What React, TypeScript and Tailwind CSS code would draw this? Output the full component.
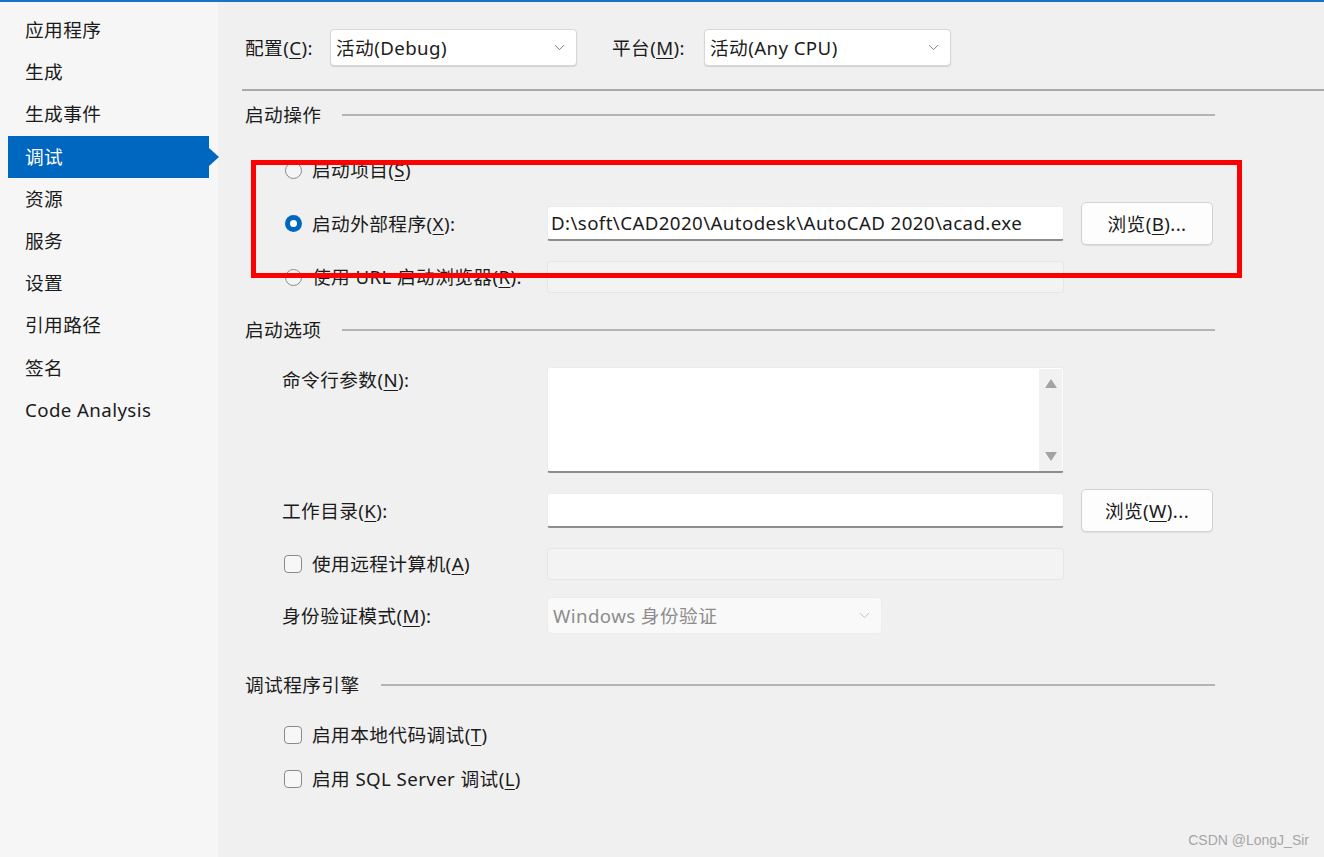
import React from "react";
import { ChevronDown } from "lucide-react";

function U({ children }: { children: React.ReactNode }) {
  return <span className="underline decoration-1 underline-offset-[3px]">{children}</span>;
}

function Radio({ checked }: { checked?: boolean }) {
  return checked ? (
    <span className="flex h-[17px] w-[17px] items-center justify-center rounded-full bg-[#0067c0]">
      <span className="h-[7px] w-[7px] rounded-full bg-white" />
    </span>
  ) : (
    <span className="h-[17px] w-[17px] rounded-full border-[1.5px] border-[#8a8a8a] bg-[#f5f5f5]" />
  );
}

function Check() {
  return <span className="h-[18px] w-[18px] rounded-[4px] border-[1.5px] border-[#8a8a8a] bg-[#f7f7f7]" />;
}

function Dropdown({ text, width, disabled }: { text: string; width: string; disabled?: boolean }) {
  return (
    <div
      className={
        "flex h-[37px] items-center justify-between rounded-[4px] border pl-[5px] pr-[8px] " +
        width +
        (disabled
          ? " border-[#ececec] bg-[#f9f9f9] text-[#8c8c8c]"
          : " border-[#d6d6d6] bg-white shadow-[0_1px_1px_rgba(0,0,0,0.12)]")
      }
    >
      <span>{text}</span>
      <ChevronDown size={17} strokeWidth={1.2} className={disabled ? "text-[#b5b5b5]" : "text-[#6a6a6a]"} />
    </div>
  );
}

function Field({ value, h = "h-[35px]" }: { value?: string; h?: string }) {
  return (
    <div
      className={
        "flex w-[517px] items-center rounded-[3px] border border-[#ececec] border-b-2 border-b-[#8d8d8d] bg-white pl-[3px] " + h
      }
    >
      {value}
    </div>
  );
}

function DisabledField({ h }: { h: string }) {
  return <div className={"w-[517px] rounded-[3px] border border-[#e6e6e6] bg-[#f3f3f3] " + h} />;
}

function Btn({ children }: { children: React.ReactNode }) {
  return (
    <div className="ml-[17px] flex h-[43px] w-[132px] items-center justify-center rounded-[5px] border border-[#d2d2d2] bg-[#fdfdfd] shadow-[0_1px_1px_rgba(0,0,0,0.08)]">
      {children}
    </div>
  );
}

function Heading({ children, mt }: { children: React.ReactNode; mt: string }) {
  return (
    <div className={"flex h-[24px] items-center " + mt}>
      <span className="pl-[3px]">{children}</span>
      <div className="ml-[21px] h-[2px] flex-1 bg-[#b4b4b4]" />
    </div>
  );
}

const items = ["应用程序", "生成", "生成事件", "调试", "资源", "服务", "设置", "引用路径", "签名", "Code Analysis"];

export default function App() {
  return (
    <div className="relative flex h-[857px] w-[1324px] overflow-hidden bg-[#f0f0f0] font-['Noto_Sans','Noto_Sans_CJK_SC',sans-serif] text-[18.7px] leading-[24px] tracking-[0.4px] text-[#1b1b1b]">
      <div className="absolute left-0 right-0 top-0 h-[2px] bg-[#1a73c8]" />
      {/* Sidebar */}
      <div className="w-[218px] shrink-0 bg-[#f6f6f6] pl-[8px] pt-[9px]">
        {items.map((it) =>
          it === "调试" ? (
            <div key={it} className="relative flex h-[42.2px] w-[201px] items-center bg-[#0067c0] pl-[17px] text-white">
              {it}
              <span className="absolute left-[201px] top-[12px] h-0 w-0 border-y-[9px] border-l-[10px] border-y-transparent border-l-[#0067c0]" />
            </div>
          ) : (
            <div key={it} className="flex h-[42.2px] w-[201px] items-center pl-[17px]">
              {it}
            </div>
          )
        )}
      </div>

      {/* Main */}
      <div className="relative flex-1">
        <div className="pl-[24px]">
          <div className="mt-[29px] flex h-[37px] items-center">
            <span className="w-[88px] pl-[3px]">
              配置(<U>C</U>):
            </span>
            <Dropdown text="活动(Debug)" width="w-[247px]" />
            <span className="ml-[35px] w-[92px]">
              平台(<U>M</U>):
            </span>
            <Dropdown text="活动(Any CPU)" width="w-[247px]" />
          </div>
        </div>
        <div className="ml-[24px] mt-[23px] h-[2px] bg-[#a9a9a9]" />

        <div className="pl-[24px] pr-[109px]">
          <Heading mt="mt-[12px]">启动操作</Heading>

          <div className="pl-[40px]">
            <div className="mt-[28px] flex h-[30px] items-center pl-[3px]">
              <Radio />
              <span className="ml-[10px]">
                启动项目(<U>S</U>)
              </span>
            </div>
            <div className="mt-[17px] flex h-[43px] items-center">
              <div className="flex w-[265px] items-center pl-[3px]">
                <Radio checked />
                <span className="ml-[10px]">
                  启动外部程序(<U>X</U>):
                </span>
              </div>
              <Field value="D:\soft\CAD2020\Autodesk\AutoCAD 2020\acad.exe" />
              <Btn>
                浏览(<U>B</U>)...
              </Btn>
            </div>
            <div className="mt-[16px] flex h-[32px] items-center">
              <div className="flex w-[265px] items-center pl-[3px]">
                <Radio />
                <span className="ml-[10px] whitespace-nowrap">
                  使用 URL 启动浏览器(<U>R</U>):
                </span>
              </div>
              <DisabledField h="h-[32px]" />
            </div>
          </div>

          <Heading mt="mt-[25px]">启动选项</Heading>

          <div className="pl-[40px]">
            <div className="mt-[25px] flex">
              <div className="w-[265px] pt-[1px]">
                命令行参数(<U>N</U>):
              </div>
              <div className="flex h-[106px] w-[517px] justify-end rounded-[3px] border border-[#ececec] border-b-2 border-b-[#8d8d8d] bg-white">
                <div className="mr-[1px] mt-[1px] flex w-[23px] flex-col items-center justify-between bg-[#f1f1f1] py-[10px]">
                  <span className="h-0 w-0 border-x-[6px] border-b-[9px] border-x-transparent border-b-[#a3a3a3]" />
                  <span className="h-0 w-0 border-x-[6px] border-t-[9px] border-x-transparent border-t-[#a3a3a3]" />
                </div>
              </div>
            </div>
            <div className="mt-[16px] flex h-[43px] items-center">
              <div className="w-[265px]">
                工作目录(<U>K</U>):
              </div>
              <Field h="h-[35px]" />
              <Btn>
                浏览(<U>W</U>)...
              </Btn>
            </div>
            <div className="mt-[16px] flex h-[32px] items-center">
              <div className="flex w-[265px] items-center pl-[2px]">
                <Check />
                <span className="ml-[10px]">
                  使用远程计算机(<U>A</U>)
                </span>
              </div>
              <DisabledField h="h-[32px]" />
            </div>
            <div className="mt-[17px] flex h-[37px] items-center">
              <div className="w-[265px]">
                身份验证模式(<U>M</U>):
              </div>
              <Dropdown text="Windows 身份验证" width="w-[335px]" disabled />
            </div>
          </div>

          <Heading mt="mt-[39px]">调试程序引擎</Heading>

          <div className="pl-[40px]">
            <div className="mt-[23px] flex h-[30px] items-center pl-[2px]">
              <Check />
              <span className="ml-[10px]">
                启用本地代码调试(<U>T</U>)
              </span>
            </div>
            <div className="mt-[14px] flex h-[30px] items-center pl-[2px]">
              <Check />
              <span className="ml-[10px]">
                启用 SQL Server 调试(<U>L</U>)
              </span>
            </div>
          </div>
        </div>

        {/* red highlight */}
        <div className="pointer-events-none absolute left-[33px] top-[160px] h-[118px] w-[991px] border-[5px] border-[#ff0000]" />
      </div>

      <div className="absolute bottom-[7px] right-[15px] font-['Liberation_Sans',sans-serif] text-[14px] leading-[20px] tracking-normal text-[#a6a6a6]">
        CSDN @LongJ_Sir
      </div>
    </div>
  );
}
